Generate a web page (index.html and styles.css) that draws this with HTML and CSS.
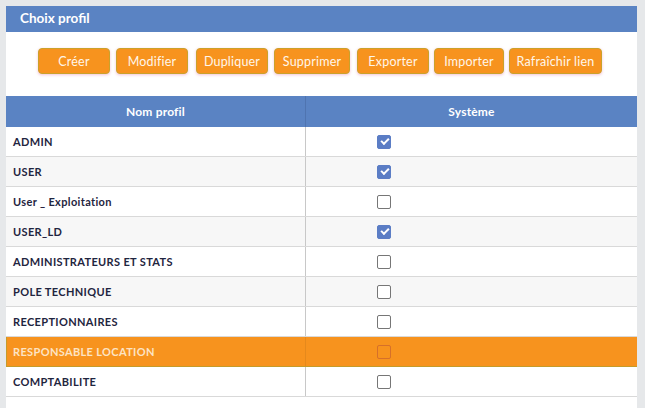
FILE: index.html
```html
<!DOCTYPE html>
<html lang="fr">
<head>
<meta charset="utf-8">
<title>Choix profil</title>
<link rel="stylesheet" href="styles.css">
</head>
<body>
<div class="panel">
  <div class="panel-title">Choix profil</div>
  <div class="toolbar">
    <button class="btn w72">Créer</button>
    <button class="btn w72">Modifier</button>
    <button class="btn w72">Dupliquer</button>
    <button class="btn w76">Supprimer</button>
    <button class="btn w72">Exporter</button>
    <button class="btn w70">Importer</button>
    <button class="btn w93">Rafraîchir lien</button>
  </div>
  <table class="grid">
    <thead>
      <tr><th class="c1">Nom profil</th><th class="c2">Système</th></tr>
    </thead>
    <tbody>
      <tr><td>ADMIN</td><td class="chk"><span class="box on"></span></td></tr>
      <tr class="alt"><td>USER</td><td class="chk"><span class="box on"></span></td></tr>
      <tr><td>User _ Exploitation</td><td class="chk"><span class="box"></span></td></tr>
      <tr class="alt"><td>USER_LD</td><td class="chk"><span class="box on"></span></td></tr>
      <tr><td>ADMINISTRATEURS ET STATS</td><td class="chk"><span class="box"></span></td></tr>
      <tr class="alt"><td>POLE TECHNIQUE</td><td class="chk"><span class="box"></span></td></tr>
      <tr><td>RECEPTIONNAIRES</td><td class="chk"><span class="box"></span></td></tr>
      <tr class="sel"><td>RESPONSABLE LOCATION</td><td class="chk"><span class="box"></span></td></tr>
      <tr><td>COMPTABILITE</td><td class="chk"><span class="box"></span></td></tr>
    </tbody>
  </table>
</div>
</body>
</html>
```
FILE: styles.css
```css
html, body {
  margin: 0;
  padding: 0;
  background: #e6e8ea;
  height: 408px;
  overflow: hidden;
}
body {
  font-family: "Lato", "Open Sans", sans-serif;
  padding: 6px 8px 0 6px;
}
.panel {
  background: #ffffff;
  height: 402px;
}
.panel-title {
  background: #5a83c3;
  color: #ffffff;
  font-weight: 700;
  font-size: 13.5px;
  height: 26px;
  line-height: 25px;
  padding-left: 14px;
}
.toolbar {
  display: flex;
  justify-content: flex-start;
  gap: 6px;
  padding: 16px 0 0 32px;
  height: 64px;
  box-sizing: border-box;
}
.btn {
  height: 26px;
  border: 1px solid #c9a22c;
  background: #f7931e;
  color: #fff6ea;
  border-radius: 4px;
  font-family: "Lato", sans-serif;
  font-size: 12.5px;
  letter-spacing: 0.2px;
  padding: 0;
  box-shadow: 0 1px 3px rgba(230, 120, 160, 0.45);
}
.w72 { width: 72px; }
.w76 { width: 76px; }
.w70 { width: 70px; }
.w93 { width: 93px; }
.toolbar .btn:nth-child(3) { margin-left: 2px; }
.toolbar .btn:nth-child(5) { margin-left: 1px; }
.toolbar .btn:nth-child(6) { margin-left: -1px; }
.toolbar .btn:nth-child(7) { margin-left: -1px; }

.grid {
  border-collapse: collapse;
  width: 631px;
  table-layout: fixed;
}
.grid th {
  background: #5a83c3;
  color: #ffffff;
  font-size: 12px;
  font-weight: 700;
  letter-spacing: 0.2px;
  height: 31px;
  padding: 0;
  text-align: center;
}
.grid th.c1 {
  width: 299px;
  border-right: 1px solid #4f74b0;
}
.grid td {
  height: 29px;
  padding: 0 0 0 7px;
  font-size: 11px;
  font-weight: 700;
  letter-spacing: 0.35px;
  color: #1f2540;
  border-bottom: 1px solid #d9d9d9;
  border-right: 1px solid #c8c8c8;
}
.grid td.chk {
  padding: 0 0 0 71px;
  border-right: none;
}
.grid tr.alt td { background: #f7f7f7; }
.grid tr.sel td {
  background: #f7931e;
  color: #fde3c4;
  border-right-color: #e5891c;
  border-bottom-color: #c59b2a;
}
.grid tr.sel td:first-child { box-shadow: inset 1px 0 0 #c59b2a; }
.box {
  display: block;
  width: 12px;
  height: 12px;
  border: 1.5px solid #767676;
  border-radius: 2px;
  background: #ffffff;
  position: relative;
}
.box.on {
  background: #5b7dc5;
  border-color: #5b7dc5;
}
.box.on::after {
  content: "";
  position: absolute;
  left: 3px;
  top: 2px;
  width: 6px;
  height: 3px;
  border-left: 2px solid #ffffff;
  border-bottom: 2px solid #ffffff;
  transform: rotate(-45deg);
}
.grid tr.sel .box {
  background: #f7931e;
  border-color: #d6702a;
}
```
